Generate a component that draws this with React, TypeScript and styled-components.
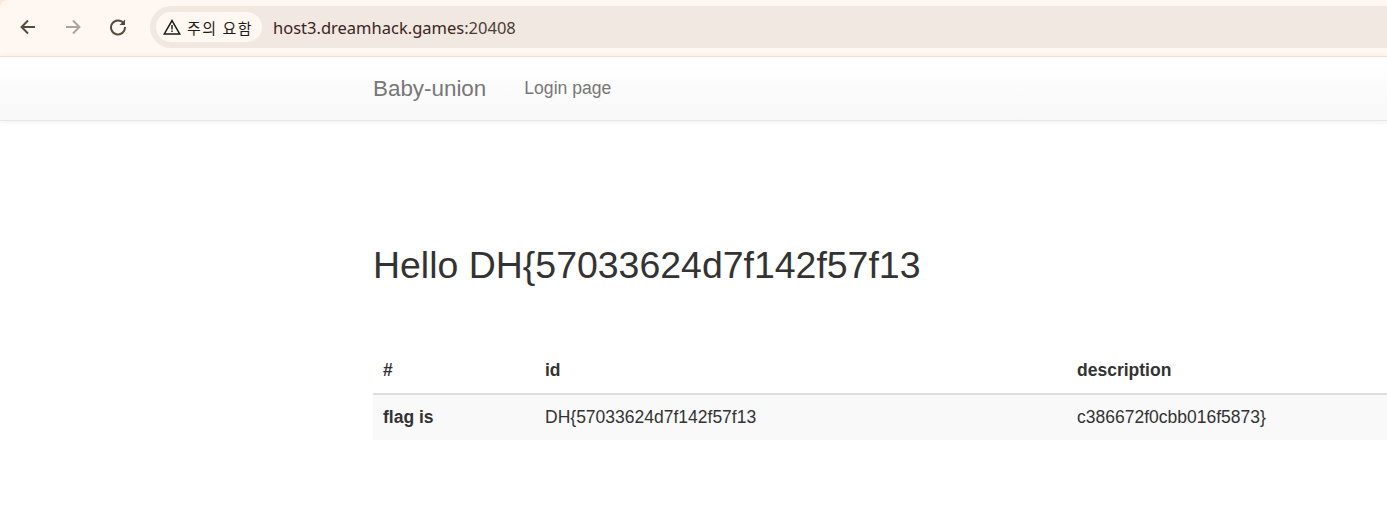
import React from 'react'
import styled, { createGlobalStyle } from 'styled-components'

// ------------------------------------------------ style
const GlobalStyle = createGlobalStyle`
  html, body {
    margin: 0;
    padding: 0;
    background: #fff;
    overflow: hidden;
  }
  body {
    width: 1387px;
    height: 521px;
    font-family: "Liberation Sans", Arial, sans-serif;
    color: #333;
  }
`
const Frame = styled.div`
  background: #ffe9d6;
`
const Toolbar = styled.div`
  display: flex;
  align-items: center;
  height: 56px;
  padding: 0 0 2px 5px;
  box-sizing: border-box;
  background: #fff7f2;
  border-top-left-radius: 8px;
`
const NavButton = styled.button`
  display: flex;
  align-items: center;
  justify-content: center;
  width: 45px;
  height: 36px;
  padding: 0;
  border: 0;
  background: transparent;
  color: ${(p) => (p.disabled ? '#aaa59f' : '#574a3c')};
`
const AddressBar = styled.div`
  flex: 1;
  display: flex;
  align-items: center;
  height: 42px;
  margin-left: 10px;
  padding-left: 6px;
  background: #f2e8e2;
  border-radius: 21px 0 0 21px;
`
const SecurityChip = styled.div`
  display: flex;
  align-items: center;
  gap: 6px;
  width: 106px;
  height: 30px;
  padding-left: 7px;
  box-sizing: border-box;
  background: #fff7f2;
  border-radius: 15px;
  font-family: "Noto Sans CJK KR", "Noto Sans", sans-serif;
  font-size: 15px;
  letter-spacing: 1.5px;
  white-space: nowrap;
  color: #1f1b18;
`
const Url = styled.span`
  margin-left: 11px;
  font-family: "Noto Sans", "Open Sans", sans-serif;
  font-size: 16.5px;
  color: #4a3d36;
`
const UrlHost = styled.span`
  color: #3a241c;
`
const Navbar = styled.nav`
  display: flex;
  align-items: center;
  height: 65px;
  padding-left: 373px;
  box-sizing: border-box;
  background: linear-gradient(to bottom, #fff 0%, #f8f8f8 100%);
  border-top: 1px solid #f5dfca;
  border-bottom: 1px solid #e7e7e7;
  box-shadow: 0 1px 6px rgba(0, 0, 0, 0.07);
`
const Brand = styled.a`
  font-size: 22.4px;
  color: #777;
`
const NavLink = styled.a`
  margin-left: 38px;
  font-size: 17.6px;
  color: #777;
`
const Main = styled.main`
  width: 1014px;
  margin-left: 373px;
`
const Heading = styled.h1`
  margin: 117px 0 0;
  height: 54px;
  font-size: 37.45px;
  font-weight: 400;
  line-height: 54px;
  color: #333;
`
const Table = styled.div`
  margin-top: 58px;
  font-size: 17.5px;
`
const Row = styled.div<{ $striped?: boolean; $head?: boolean }>`
  display: grid;
  grid-template-columns: 162px 532px 1fr;
  align-items: center;
  height: 45px;
  padding-bottom: ${(p) => (p.$head ? '2px' : '0')};
  box-sizing: border-box;
  background: ${(p) => (p.$striped ? '#f9f9f9' : 'transparent')};
  border-bottom: ${(p) => (p.$head ? '2px solid #ddd' : '0')};
  font-weight: ${(p) => (p.$head ? 700 : 400)};
`
const Cell = styled.div<{ $bold?: boolean }>`
  padding-left: 10px;
  font-weight: ${(p) => (p.$bold ? 700 : 'inherit')};
`

// ------------------------------------------------ icons
const ArrowIcon: React.FC<{ flip?: boolean }> = ({ flip }) => (
  <svg width="16" height="16" viewBox="0 0 16 16" style={flip ? { transform: 'scaleX(-1)' } : undefined}>
    <path d="M15 8H2M8 1.5 1.6 8 8 14.5" fill="none" stroke="currentColor" strokeWidth="2" />
  </svg>
)

const ReloadIcon = () => (
  <svg width="18" height="18" viewBox="0 0 18 18">
    <path d="M14.6 5.2A7 7 0 1 0 16 9" fill="none" stroke="currentColor" strokeWidth="2" />
    <path d="M16 1.5V7h-5.5z" fill="currentColor" />
  </svg>
)

const WarningIcon = () => (
  <svg width="18" height="16" viewBox="0 0 18 16">
    <path d="M9 1.6 16.7 15H1.3z" fill="none" stroke="#1f1b18" strokeWidth="1.5" />
    <path d="M9 6v4.6M9 11.6v1.5" fill="none" stroke="#1f1b18" strokeWidth="1.4" />
  </svg>
)

// ------------------------------------------------ comp
export default function App() {
  return (
    <>
      <GlobalStyle />
      <Frame>
        <Toolbar>
          <NavButton>
            <ArrowIcon />
          </NavButton>
          <NavButton disabled>
            <ArrowIcon flip />
          </NavButton>
          <NavButton>
            <ReloadIcon />
          </NavButton>
          <AddressBar>
            <SecurityChip>
              <WarningIcon />
              주의 요함
            </SecurityChip>
            <Url>
              <UrlHost>host3.dreamhack.games</UrlHost>:20408
            </Url>
          </AddressBar>
        </Toolbar>
      </Frame>
      <Navbar>
        <Brand>Baby-union</Brand>
        <NavLink>Login page</NavLink>
      </Navbar>
      <Main>
        <Heading>Hello DH{'{'}57033624d7f142f57f13</Heading>
        <Table>
          <Row $head>
            <Cell>#</Cell>
            <Cell>id</Cell>
            <Cell>description</Cell>
          </Row>
          <Row $striped>
            <Cell $bold>flag is</Cell>
            <Cell>DH{'{'}57033624d7f142f57f13</Cell>
            <Cell>c386672f0cbb016f5873{'}'}</Cell>
          </Row>
        </Table>
      </Main>
    </>
  )
}
